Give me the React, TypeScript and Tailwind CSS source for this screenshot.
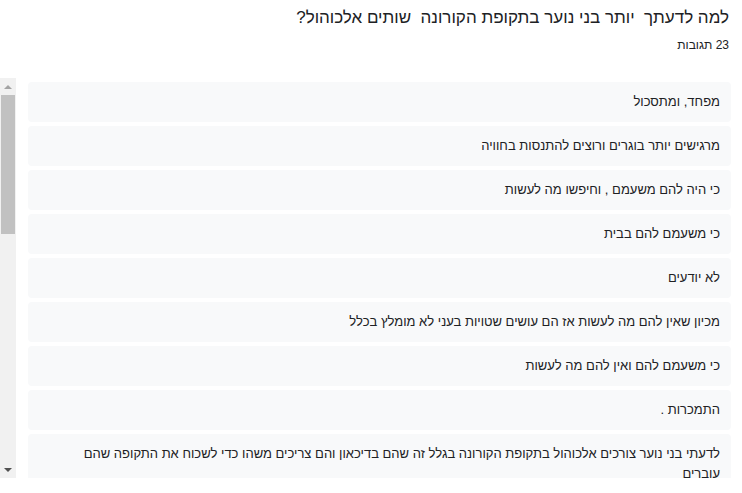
const answers = [
  'מפחד, ומתסכול',
  'מרגישים יותר בוגרים ורוצים להתנסות בחוויה',
  'כי היה להם משעמם , וחיפשו מה לעשות',
  'כי משעמם להם בבית',
  'לא יודעים',
  'מכיון שאין להם מה לעשות אז הם עושים שטויות בעני לא מומלץ בכלל',
  'כי משעמם להם ואין להם מה לעשות',
  'התמכרות .',
  'לדעתי בני נוער צורכים אלכוהול בתקופת הקורונה בגלל זה שהם בדיכאון והם צריכים משהו כדי לשכוח את התקופה שהם\nעוברים',
  'כי אין מה לעשות',
]

function FakeScrollbar() {
  return (
    <div className="flex h-full w-[16px] shrink-0 flex-col bg-[#f1f1f1]">
      <div className="flex h-[17px] items-center justify-center">
        <div className="h-0 w-0 border-x-[4px] border-b-[4px] border-x-transparent border-b-[#a3a3a3]" />
      </div>
      <div className="mx-[1px] h-[139px] bg-[#c1c1c1]" />
      <div className="flex-1" />
      <div className="flex h-[17px] items-center justify-center">
        <div className="h-0 w-0 border-x-[4px] border-t-[4px] border-x-transparent border-t-[#505050]" />
      </div>
    </div>
  )
}

export default function App() {
  return (
    <div
      className="h-[493px] w-[742px] overflow-hidden bg-white text-[#202124]"
      style={{ fontFamily: '"Liberation Sans", Arial, sans-serif' }}
    >
      <div dir="rtl" className="flex flex-col pr-[13px] pt-[6px]">
        <h2 className="whitespace-pre-wrap text-[17px] leading-[24px]">
          {'למה לדעתך  יותר בני נוער בתקופת הקורונה  שותים אלכוהול?'}
        </h2>
        <p className="mt-[7px] text-[12px] leading-[16px]">23 תגובות</p>
      </div>

      <div className="mt-[25px] flex h-[400px]">
        <FakeScrollbar />
        <div className="flex-1 overflow-hidden pl-[12px] pr-[11px] pt-[4px]">
          <div dir="rtl" className="flex flex-col gap-[4px]">
            {answers.map((answer, i) => (
              <div
                key={i}
                className="whitespace-pre-line rounded-[4px] bg-[#f8f9fa] px-[11px] py-[10px] text-[13px] leading-[20px]"
              >
                {answer}
              </div>
            ))}
          </div>
        </div>
      </div>
    </div>
  )
}
